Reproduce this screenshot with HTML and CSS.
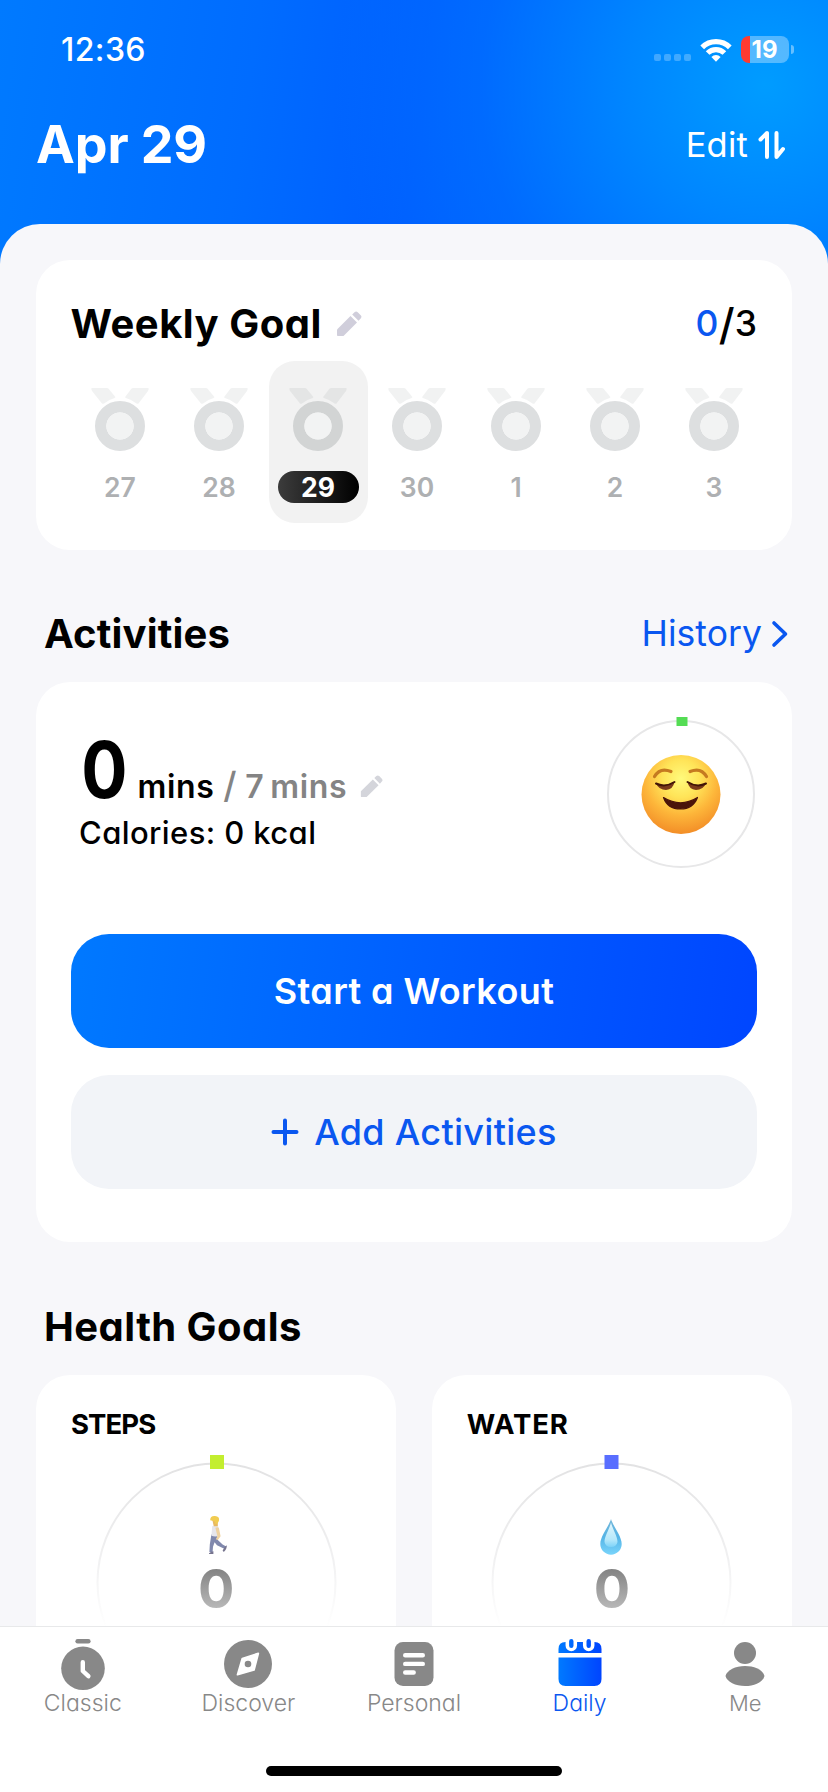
FILE: index.html
```html
<!DOCTYPE html>
<html lang="en">
<head>
<meta charset="utf-8">
<title>Daily</title>
<link rel="stylesheet" href="styles.css">
</head>
<body>
<svg class="defs" aria-hidden="true">
  <defs>
    <symbol id="medal" viewBox="0 0 58 63">
      <path d="M.5 0H16q1 0 1.600 .8L24 8.500q.8 1-.4 1.600-6.500 2-10.600 5.300-1.400 1.100-2.400-.4L1 3Q0 1 .5 0zM57.500 0H42q-1 0-1.600 .8L34.500 8.500q-.8 1 .4 1.600 6.500 2 10.600 5.300 1.400 1.100 2.400-.4L57 3Q58 1 57.500 0z" fill="currentColor" opacity=".42"/>
      <circle cx="29" cy="38" r="19.300" fill="none" stroke="currentColor" stroke-width="11.400"/>
      <circle cx="29" cy="38" r="13.600" fill="#f2f3f3"/>
    </symbol>
    <symbol id="pencil" viewBox="0 0 26 26">
      <path d="M1 18.500 14.500 5 21 11.500 7.500 25H1.800Q1 25 1 24z"/>
      <path d="M16.200 3.500 18.500 1.200q1.600-1.400 3.200 0l3 3q1.500 1.600 0 3.200L22.500 9.800z"/>
    </symbol>
  </defs>
</svg>
<div class="phone">
  <header class="status">
    <span class="clock">12:36</span>
    <div class="status-icons">
      <div class="dots"><i></i><i></i><i></i><i></i></div>
      <svg class="wifi" width="32" height="24" viewBox="0 0 32 24" fill="none" stroke="#fff" stroke-width="5.200">
        <path d="M2.200 9.300a19.500 19.500 0 0 1 27.600 0"/>
        <path d="M7.600 15a11.900 11.900 0 0 1 16.800 0"/>
        <path d="M11.400 18.900a6.500 6.500 0 0 1 9.200 0L16 23.700z" fill="#fff" stroke="none"/>
      </svg>
      <div class="battery"><span class="battery-level">19</span></div>
      <i class="battery-nub"></i>
    </div>
  </header>
  <div class="topbar">
    <h1 class="date">Apr 29</h1>
    <div class="edit"><span>Edit</span>
      <svg width="27" height="30" viewBox="0 0 27 30" fill="none" stroke="#fff" stroke-width="4" stroke-linecap="round" stroke-linejoin="round">
        <path d="M2.500 9.500 9 3v24M18.500 3v24l6.500-8"/>
      </svg>
    </div>
  </div>
  <main class="sheet">
    <section class="card weekly">
      <div class="weekly-head">
        <h2 class="weekly-title">Weekly Goal</h2>
        <svg class="pencil" width="26" height="26"><use href="#pencil"/></svg>
        <div class="score"><b class="done">0</b><b class="slash">/</b><b>3</b></div>
      </div>
      <div class="days">
        <div class="day"><svg class="medal"><use href="#medal"/></svg><span class="num">27</span></div>
        <div class="day"><svg class="medal"><use href="#medal"/></svg><span class="num">28</span></div>
        <div class="day today"><svg class="medal"><use href="#medal"/></svg><span class="num">29</span></div>
        <div class="day"><svg class="medal"><use href="#medal"/></svg><span class="num">30</span></div>
        <div class="day"><svg class="medal"><use href="#medal"/></svg><span class="num">1</span></div>
        <div class="day"><svg class="medal"><use href="#medal"/></svg><span class="num">2</span></div>
        <div class="day"><svg class="medal"><use href="#medal"/></svg><span class="num">3</span></div>
      </div>
    </section>

    <div class="section-head">
      <h2 class="h-activities">Activities</h2>
      <a class="history"><span>History</span>
        <svg width="18" height="28" viewBox="0 0 18 28" fill="none" stroke="#0a57f0" stroke-width="3.600" stroke-linecap="round" stroke-linejoin="round"><path d="M3 3l11.500 11L3 25"/></svg>
      </a>
    </div>
    <section class="card activity">
      <div class="summary">
        <div class="totals">
          <div class="minutes">
            <span class="big">0</span><span class="mins">mins</span><span class="target"><span class="bar">/</span><span class="seven">7</span><span class="unit">mins</span></span>
            <svg class="pencil small" width="23" height="23"><use href="#pencil"/></svg>
          </div>
          <p class="calories">Calories: 0 kcal</p>
        </div>
        <svg class="mood" width="150" height="156" viewBox="0 0 150 156">
          <defs>
            <radialGradient id="face" cx="50%" cy="30%" r="74%">
              <stop offset="0" stop-color="#fffa7c"/><stop offset=".32" stop-color="#ffe458"/><stop offset=".62" stop-color="#fdb63a"/><stop offset="1" stop-color="#f18724"/>
            </radialGradient>
          </defs>
          <circle cx="75" cy="79" r="73" fill="none" stroke="#e7e7e8" stroke-width="2"/>
          <rect x="70.500" y="2" width="11" height="9" fill="#54dc54"/>
          <circle cx="75" cy="79.500" r="39.500" fill="url(#face)"/>
          <path d="M48.500 61.500Q54 52 65 56.500M100.500 61.500Q95 52 84 56.500" fill="none" stroke="#c57a20" stroke-width="3.200" stroke-linecap="round"/>
          <path d="M50 68.500q9 4 18.500-1.500Q67 74.500 60 75q-7 0-10-6.500zM81.500 67Q91 72.500 100 68.500q-3 6.500-10 6.500-7-.5-8.500-8z" fill="#7a3a1a"/>
          <path d="M50 68.500q9 4.500 18.500-1.500M81.500 67Q91 73 100 68.500" fill="none" stroke="#421507" stroke-width="2" stroke-linecap="round"/>
          <path d="M57.500 82.500q17 10.500 34 0Q87 94 74.500 94 61.500 94 57.500 82.500z" fill="#4b140a" stroke="#4b140a" stroke-width="1.200" stroke-linejoin="round"/>
        </svg>
      </div>
      <div class="actions">
        <div class="btn primary"><span>Start a Workout</span></div>
        <div class="btn secondary">
          <svg width="28" height="28" viewBox="0 0 28 28" stroke="#0a57f0" stroke-width="4" stroke-linecap="round"><path d="M14 2.500v23M2.500 14h23"/></svg>
          <span>Add Activities</span>
        </div>
      </div>
    </section>

    <div class="section-head second">
      <h2 class="h-health">Health Goals</h2>
    </div>
    <div class="goals">
      <section class="card goal">
        <h3 class="steps">STEPS</h3>
        <div class="gauge">
          <svg width="243" height="250" viewBox="0 0 243 250">
            <defs>
              <linearGradient id="fade" gradientUnits="userSpaceOnUse" x1="0" y1="10" x2="0" y2="175">
                <stop offset="0" stop-color="#e2e2e3"/><stop offset=".6" stop-color="#f1f1f2"/><stop offset="1" stop-color="#fff"/>
              </linearGradient>
            </defs>
            <circle cx="121.500" cy="130.500" r="119" fill="none" stroke="url(#fade)" stroke-width="2"/>
            <rect x="115" y="3" width="14" height="14" fill="#c3ee2f"/>
            <g transform="translate(114 64) scale(.8 .76) translate(-114 -60.500)">
              <path d="M117 85 124 85 125 92 131 98 136 101 133 103.500 124 99 121 95 119 101 118.500 108h-4L115 98z" fill="#8088ad"/>
              <path d="M114 109.500q3-2.500 5.500-2.500v3.500H114zM131 106l3-5 2-2q1 4-3.500 9z" fill="#77758f"/>
              <path d="M118 74q5-3 8 1l1 11q-4 2.500-10 .5z" fill="#e6e6ec"/>
              <path d="M122 76q3-2 4.500 1l2 10-3.500 5-2.500-1 2-4z" fill="#efd2a0"/>
              <path d="M118 65h7v9h-5z" fill="#e8b95f"/>
              <path d="M115.500 66q0-6 6-5.500 6 .5 5 6-1.500 5-4.500 4.500 0-4-2.500-4z" fill="#f1cc51"/>
            </g>
          </svg>
          <span class="count">0</span>
        </div>
      </section>
      <section class="card goal">
        <h3 class="water">WATER</h3>
        <div class="gauge">
          <svg width="243" height="250" viewBox="0 0 243 250">
            <defs>
              <linearGradient id="drop" x1="0" y1="0" x2="0" y2="1">
                <stop offset="0" stop-color="#74b6d8"/><stop offset=".5" stop-color="#55b4e6"/><stop offset="1" stop-color="#79d4fb"/>
              </linearGradient>
              <linearGradient id="shine" x1="0" y1="0" x2="0" y2="1">
                <stop offset="0" stop-color="#e4f7fd"/><stop offset=".7" stop-color="#b5e8fb"/><stop offset="1" stop-color="#7ed3f8"/>
              </linearGradient>
            </defs>
            <circle cx="121.500" cy="130.500" r="119" fill="none" stroke="url(#fade)" stroke-width="2"/>
            <rect x="114.500" y="3" width="14" height="14" fill="#596eff"/>
            <path d="M121 67C119 74 110.300 84 110.300 92a10.700 10.700 0 0 0 21.400 0C131.700 84 123 74 121 67z" fill="url(#drop)"/>
            <path d="M121 70.500C119.500 77 114.500 84 114.500 90q1 5 6.500 5t6.500-5C127.500 84 122.500 77 121 70.500z" fill="url(#shine)"/>
          </svg>
          <span class="count">0</span>
        </div>
      </section>
    </div>
  </main>

  <nav class="tabs">
    <div class="tab">
      <svg width="56" height="56" viewBox="0 0 56 56"><rect x="20.400" y="3" width="15.200" height="4.400" rx="2.200" fill="#888"/><circle cx="28" cy="32.300" r="21.800" fill="#888"/><path d="M27.800 26.300V35l5.600 5.200" fill="none" stroke="#fff" stroke-width="4.400" stroke-linecap="round" stroke-linejoin="round"/></svg>
      <span class="t-classic">Classic</span>
    </div>
    <div class="tab">
      <svg width="56" height="56" viewBox="0 0 56 56"><circle cx="28" cy="28" r="24" fill="#888"/><path d="M38.300 17.400 34 34 17.500 38.700 22.300 22.500z" fill="#fff" stroke="#fff" stroke-width="1.800" stroke-linejoin="round"/><circle cx="28" cy="28" r="3.300" fill="#888"/></svg>
      <span class="t-discover">Discover</span>
    </div>
    <div class="tab">
      <svg width="56" height="56" viewBox="0 0 56 56"><rect x="8.500" y="6" width="39" height="44" rx="8.500" fill="#888"/><path d="M19.200 19.200h17.600M19.200 27.900h17.600M19.200 36.500h8.500" stroke="#fff" stroke-width="4.400" stroke-linecap="round"/></svg>
      <span class="t-personal">Personal</span>
    </div>
    <div class="tab active">
      <svg width="56" height="56" viewBox="0 0 56 56">
        <defs><linearGradient id="cal" gradientUnits="userSpaceOnUse" x1="6" y1="0" x2="50" y2="0"><stop offset="0" stop-color="#007aff"/><stop offset="1" stop-color="#0044ff"/></linearGradient></defs>
        <path d="M6.500 17v-4q0-7 7-7h29q7 0 7 7v4zM6.500 21.600h43V43q0 7-7 7h-29q-7 0-7-7z" fill="url(#cal)"/>
        <path d="M19.300 5v4.500M36.700 5v4.500" stroke="#fff" stroke-width="11.500" stroke-linecap="round"/>
        <path d="M17.100 5.200a2.200 2.200 0 0 1 4.400 0v4.600a2.200 2.200 0 0 1-4.400 0zM34.500 5.200a2.200 2.200 0 0 1 4.400 0v4.600a2.200 2.200 0 0 1-4.400 0z" fill="url(#cal)"/>
      </svg>
      <span class="t-daily">Daily</span>
    </div>
    <div class="tab">
      <svg width="56" height="56" viewBox="0 0 56 56" fill="#888"><circle cx="28" cy="17" r="11"/><path d="M8.500 40C10 34 18.500 30 28 30s18 4 19.500 10C46 46 37.500 50 28 50S10 46 8.500 40z"/></svg>
      <span class="t-me">Me</span>
    </div>
  </nav>
  <div class="home"><i></i></div>
</div>
</body>
</html>
```
FILE: styles.css
```css
* { box-sizing: border-box; }
body { margin: 0; font-family: Inter, "Open Sans", sans-serif; font-feature-settings: "cv11"; color: #000; background: #fff; }
h1, h2, h3, p { margin: 0; white-space: nowrap; }
svg { display: block; flex: none; }
span { white-space: nowrap; }
.defs { position: absolute; width: 0; height: 0; }

.phone {
  width: 828px; height: 1792px; overflow: hidden;
  display: flex; flex-direction: column;
  background:
    radial-gradient(circle 430px at 765px 85px, #009cff 0%, rgba(0, 138, 255, .9) 32%, rgba(0, 115, 255, .6) 66%, rgba(0, 96, 255, 0) 100%) 0 0 / 828px 300px no-repeat,
    linear-gradient(98deg, #007aff 0%, #006cff 30%, #005eff 50%, #0060ff 100%) 0 0 / 828px 300px no-repeat,
    #fff;
}

.status { height: 99px; flex: none; display: flex; align-items: center; justify-content: space-between; padding: 0 34px 0 61px; color: #fff; }
.clock { font-size: 32px; font-weight: 500; line-height: 40px; letter-spacing: .4px; }
.status-icons { display: flex; align-items: center; }
.dots { display: flex; gap: 3px; padding-top: 16px; margin-right: 9px; }
.dots i { width: 7px; height: 7px; border-radius: 2px; background: rgba(255, 255, 255, .25); }
.wifi { margin-right: 9px; }
.battery { width: 48px; height: 27px; border-radius: 8px; background: linear-gradient(90deg, #ff3b30 9px, rgba(255, 255, 255, .33) 9px); text-align: center; }
.battery-level { font-size: 24px; font-weight: 700; line-height: 28px; padding-right: 1px; display: block; }
.battery-nub { width: 3px; height: 9px; margin-left: 2px; border-radius: 0 4px 4px 0; background: rgba(255, 255, 255, .4); }

.topbar { height: 91px; flex: none; display: flex; align-items: center; justify-content: space-between; padding: 0 43px 0 36px; color: #fff; }
.date { font-size: 52px; font-weight: 650; line-height: 60px; letter-spacing: -.1px; }
.edit { display: flex; align-items: center; gap: 10px; font-size: 34.5px; font-weight: 400; line-height: 40px; letter-spacing: .2px; }

.sheet { margin-top: 34px; height: 1402px; flex: none; overflow: hidden; padding: 36px 36px 0; border-radius: 40px 40px 0 0; background: #f7f7fa; }
.card { background: #fff; border-radius: 34px; }

.weekly { height: 289.5px; padding: 32px 35px 0 34.5px; }
.weekly-head { height: 64px; display: flex; align-items: center; }
.weekly-title { font-size: 40px; font-weight: 650; line-height: 64px; letter-spacing: .5px; }
.pencil { fill: #d0cedb; margin-left: 14.5px; }
.score { margin-left: auto; display: flex; align-items: center; font-size: 35.5px; line-height: 64px; }
.score b { font-weight: 500; }
.score .done { color: #0a57f0; }
.score .slash { font-size: 43px; font-weight: 500; margin: 0 0 0 .5px; }
.days { margin-top: 5px; display: grid; grid-template-columns: repeat(7, 99px); }
.day { height: 162px; border-radius: 26px; padding-top: 27px; display: flex; flex-direction: column; align-items: center; gap: 20px; color: #dddfe0; }
.medal { width: 58px; height: 63px; }
.num { width: 81px; height: 32px; border-radius: 16px; text-align: center; font-size: 26.5px; font-weight: 600; line-height: 33px; color: #aeb0b2; }
.today { background: #f2f2f2; color: #d2d4d4; }
.today .num { color: #fff; font-weight: 700; background: linear-gradient(90deg, #3c3c3c, #000); }

.section-head { height: 96px; margin-top: 36.5px; padding: 0 3px 0 8px; display: flex; align-items: center; justify-content: space-between; }
.second { margin-top: 37px; }
.section-head h2 { font-size: 40px; font-weight: 650; line-height: 60px; letter-spacing: .15px; }
.section-head .h-health { letter-spacing: .45px; }
.history { display: flex; align-items: center; gap: 9px; font-size: 35.5px; font-weight: 400; line-height: 60px; color: #0a57f0; letter-spacing: .05px; }

.activity { height: 560px; }
.summary { height: 252px; display: flex; justify-content: space-between; align-items: flex-start; padding: 33px 36px 0 43px; }
.totals { padding-top: 15.5px; }
.minutes { display: flex; align-items: baseline; font-size: 32px; font-weight: 600; line-height: 78px; height: 78px; letter-spacing: .6px; }
.big { font-size: 78px; font-weight: 700; letter-spacing: 0; transform: translateX(-1px) scaleX(.88); }
.mins { margin-left: 6px; }
.target { display: flex; align-items: baseline; color: #848484; margin-left: 9px; }
.bar { font-size: 36px; font-weight: 500; line-height: 40px; }
.seven { margin: 0 6px 0 8px; }
.small { fill: #d4d5db; margin-left: 13px; }
.calories { font-size: 31px; font-weight: 500; line-height: 48px; letter-spacing: .4px; }
.actions { padding: 0 35px; display: flex; flex-direction: column; gap: 27px; }
.btn { height: 114px; border-radius: 38px; display: flex; align-items: center; justify-content: center; }
.primary { background: linear-gradient(97deg, #0079ff, #0046ff); color: #fff; font-size: 36px; font-weight: 600; letter-spacing: .4px; }
.secondary { background: #f2f4f8; color: #0a57f0; font-size: 36px; font-weight: 500; gap: 15px; letter-spacing: .3px; }

.goals { display: grid; grid-template-columns: 1fr 1fr; column-gap: 35.5px; }
.goal { height: 400px; padding-top: 33px; }
.goal h3 { font-size: 27.5px; font-weight: 700; line-height: 32px; padding-left: 35px; }
.goal .steps { letter-spacing: -.9px; }
.goal .water { letter-spacing: .8px; }
.gauge { position: relative; margin-top: 12px; display: flex; justify-content: center; }
.count {
  position: absolute; left: 0; right: 0; top: 106px; text-align: center;
  font-size: 54px; font-weight: 650; line-height: 62px;
  color: transparent; background: linear-gradient(180deg, #828282 10px, #bdbdbd 54px); background-clip: text; -webkit-background-clip: text;
}

.tabs { height: 120px; flex: none; border-top: 1px solid #e8e9ea; padding-top: 9px; background: #fff; display: grid; grid-template-columns: repeat(5, 1fr); }
.tab { display: flex; flex-direction: column; align-items: center; font-size: 23px; font-weight: 350; line-height: 22px; color: #888; letter-spacing: 0; }
.t-me { font-size: 22px; }
.active { color: #0a57f0; }
.home { height: 46px; flex: none; background: #fff; display: flex; justify-content: center; padding-top: 20px; }
.home i { width: 296px; height: 10px; border-radius: 5px; background: #000; }
```
